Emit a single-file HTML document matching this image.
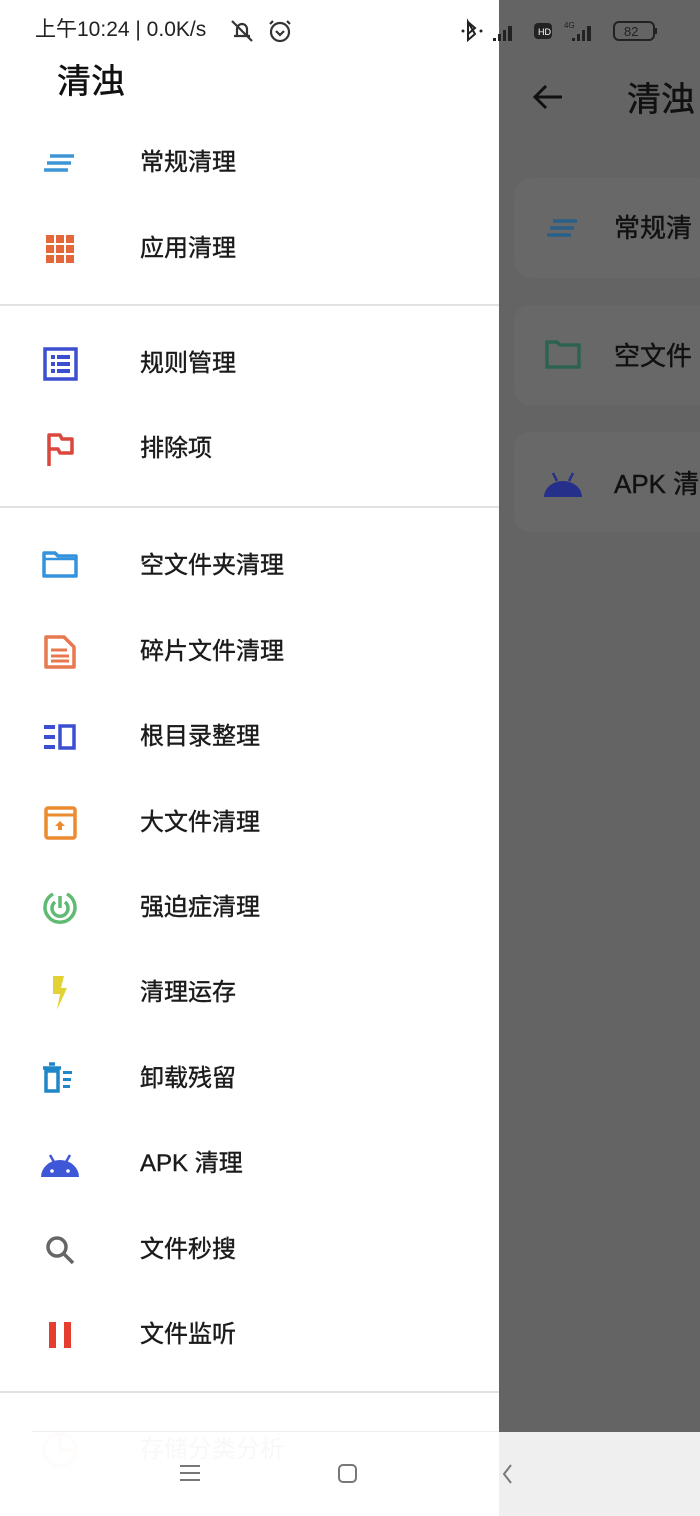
<!DOCTYPE html>
<html><head><meta charset="utf-8"><style>
*{margin:0;padding:0;box-sizing:border-box}
body{width:700px;height:1516px;position:relative;overflow:hidden;background:#646464;font-family:"Liberation Sans","Noto Sans CJK SC",sans-serif;color:#1a1a1a}
.abs{position:absolute}
#drawer{left:0;top:0;width:499px;height:1516px;background:#fff}
.t{position:absolute;left:140px;font-size:24px;line-height:30px;transform:translateY(-15px);color:#1b1b1b;-webkit-text-stroke:0.4px #1b1b1b}
.ic{position:absolute;left:40px;width:40px;height:40px;transform:translateY(-20px)}
.hr{position:absolute;left:0;width:499px;height:2px;background:#e2e2e2}
.card{position:absolute;left:514px;width:200px;height:100px;background:#686868;border-radius:16px}
.rt{position:absolute;left:614px;font-size:26px;color:#111;line-height:30px;transform:translateY(-15px);-webkit-text-stroke:0.4px #111}
</style></head><body>
<div id="drawer" class="abs"></div>
<!-- status bar -->
<div class="abs" style="left:35px;top:16px;font-size:21px;color:#222;line-height:28px">上午10:24 | 0.0K/s</div>
<svg class="abs" style="left:228px;top:17px" width="66" height="28" viewBox="0 0 66 28" fill="none" stroke="#333" stroke-width="2.2"><path d="M6 19h16M9 19v-7a5 5 0 0 1 10 0v7M4 4l20 20"/><circle cx="52" cy="15" r="9"/><path d="M48 14l4 4 4-4M45 4l-3 3M59 4l3 3"/></svg>
<svg class="abs" style="left:460px;top:18px" width="200" height="28" viewBox="0 0 200 28"><path d="M8 4l7 6-7 6V4l7 12-7 6V12" fill="none" stroke="#222" stroke-width="2"/><circle cx="3" cy="13" r="1.5" fill="#222"/><circle cx="21" cy="13" r="1.5" fill="#222"/>
<g fill="#222"><rect x="33" y="20" width="3" height="3"/><rect x="38" y="16" width="3" height="7"/><rect x="43" y="12" width="3" height="11"/><rect x="48" y="8" width="4" height="15"/><rect x="74" y="5" width="18" height="16" rx="4"/><rect x="112" y="20" width="3" height="3"/><rect x="117" y="16" width="3" height="7"/><rect x="122" y="12" width="3" height="11"/><rect x="127" y="8" width="4" height="15"/></g>
<text x="78" y="17" font-size="9" fill="#fff" font-family="Liberation Sans">HD</text><text x="104" y="10" font-size="8" fill="#222" font-family="Liberation Sans">4G</text>
<rect x="154" y="4" width="40" height="18" rx="5" fill="none" stroke="#222" stroke-width="2"/><rect x="195" y="10" width="2" height="6" fill="#222"/><text x="164" y="18" font-size="13" fill="#222" font-family="Liberation Sans">82</text></svg>
<div class="abs" style="left:57px;top:60px;font-size:34px;line-height:44px;color:#111;-webkit-text-stroke:0.5px #111">清浊</div>

<!-- items -->
<svg class="ic" style="top:163px" viewBox="0 0 40 40"><g stroke="#3d95d6" stroke-width="3.5"><path d="M10 13h24M7 20h24M4 27h24"/></g></svg>
<div class="t" style="top:163px">常规清理</div>
<svg class="ic" style="top:249px" viewBox="0 0 40 40"><g fill="#e4673a"><rect x="6" y="6" width="8" height="8"/><rect x="16" y="6" width="8" height="8"/><rect x="26" y="6" width="8" height="8"/><rect x="6" y="16" width="8" height="8"/><rect x="16" y="16" width="8" height="8"/><rect x="26" y="16" width="8" height="8"/><rect x="6" y="26" width="8" height="8"/><rect x="16" y="26" width="8" height="8"/><rect x="26" y="26" width="8" height="8"/></g></svg>
<div class="t" style="top:249px">应用清理</div>
<div class="hr" style="top:304px"></div>
<svg class="ic" style="top:364px" viewBox="0 0 40 40"><rect x="5" y="5" width="31" height="30" fill="none" stroke="#3b4fd0" stroke-width="3.5"/><g fill="#3b4fd0"><rect x="11" y="11" width="4" height="4"/><rect x="17" y="11" width="13" height="4"/><rect x="11" y="18" width="4" height="4"/><rect x="17" y="18" width="13" height="4"/><rect x="11" y="25" width="4" height="4"/><rect x="17" y="25" width="13" height="4"/></g></svg>
<div class="t" style="top:364px">规则管理</div>
<svg class="ic" style="top:449px" viewBox="0 0 40 40"><path d="M9 37V6h11l2 4h10v14H20l-2-4H9" fill="none" stroke="#d9473d" stroke-width="3.5" stroke-linejoin="round"/></svg>
<div class="t" style="top:449px">排除项</div>
<div class="hr" style="top:506px"></div>
<svg class="ic" style="top:566px" viewBox="0 0 40 40"><path d="M4 7h11l3 3h18v20H4z" fill="none" stroke="#3493dc" stroke-width="3.5" stroke-linejoin="round"/><path d="M4 13h32" stroke="#3493dc" stroke-width="2.5"/></svg>
<div class="t" style="top:566px">空文件夹清理</div>
<svg class="ic" style="top:652px" viewBox="0 0 40 40"><path d="M6 5h18l10 10v20H6z" fill="none" stroke="#e8784f" stroke-width="3.5" stroke-linejoin="round"/><path d="M11 18h16M11 24h18M11 29h18" stroke="#e8784f" stroke-width="3"/></svg>
<div class="t" style="top:652px">碎片文件清理</div>
<svg class="ic" style="top:737px" viewBox="0 0 40 40"><g fill="#3b4fd0"><rect x="4" y="8" width="11" height="4"/><rect x="4" y="18" width="11" height="4"/><rect x="4" y="28" width="11" height="4"/></g><rect x="20" y="9" width="14" height="22" fill="none" stroke="#3b4fd0" stroke-width="3.5"/></svg>
<div class="t" style="top:737px">根目录整理</div>
<svg class="ic" style="top:823px" viewBox="0 0 40 40"><rect x="6" y="5" width="29" height="30" rx="2" fill="none" stroke="#eb8a2f" stroke-width="3.5"/><path d="M6 12h29" stroke="#eb8a2f" stroke-width="3"/><path d="M20 18l-5 5h3v4h4v-4h3z" fill="#eb8a2f"/></svg>
<div class="t" style="top:823px">大文件清理</div>
<svg class="ic" style="top:908px" viewBox="0 0 40 40" fill="none" stroke="#5fba73" stroke-width="3.5"><path d="M27 6a15 15 0 1 1-14 0"/><path d="M25 14a8 8 0 1 1-10 0"/><path d="M20 8v12"/></svg>
<div class="t" style="top:908px">强迫症清理</div>
<svg class="ic" style="top:993px" viewBox="0 0 40 40"><path d="M13 3h11l-3 12h6L17 37l3-16h-7z" fill="#e3d236"/></svg>
<div class="t" style="top:993px">清理运存</div>
<svg class="ic" style="top:1079px" viewBox="0 0 40 40"><g fill="none" stroke="#1f86c7" stroke-width="3.5"><rect x="6" y="12" width="12" height="20"/><path d="M3 9h18M9 5h6"/></g><g fill="#1f86c7"><rect x="23" y="12" width="9" height="3"/><rect x="23" y="19" width="8" height="3"/><rect x="23" y="26" width="7" height="3"/></g></svg>
<div class="t" style="top:1079px">卸载残留</div>
<svg class="ic" style="top:1164px" viewBox="0 0 40 40"><path d="M1 33a19 17 0 0 1 38 0z" fill="#3d57d6"/><path d="M10 11l4 7M30 11l-4 7" stroke="#3d57d6" stroke-width="2.5"/><circle cx="12" cy="27" r="1.8" fill="#fff"/><circle cx="28" cy="27" r="1.8" fill="#fff"/></svg>
<div class="t" style="top:1164px">APK 清理</div>
<svg class="ic" style="top:1250px" viewBox="0 0 40 40" fill="none" stroke="#666" stroke-width="3.5"><circle cx="17" cy="17" r="9"/><path d="M24 24l9 9"/></svg>
<div class="t" style="top:1250px">文件秒搜</div>
<svg class="ic" style="top:1335px" viewBox="0 0 40 40"><rect x="9" y="7" width="7" height="26" fill="#e53e30"/><rect x="24" y="7" width="7" height="26" fill="#e53e30"/></svg>
<div class="t" style="top:1335px">文件监听</div>
<div class="hr" style="top:1391px"></div>
<svg class="ic" style="top:1450px;opacity:.15" viewBox="0 0 40 40" fill="none" stroke="#e53e30" stroke-width="3"><circle cx="20" cy="20" r="16"/><path d="M20 4v16h16"/></svg>
<div class="t" style="top:1450px;color:#ccc;-webkit-text-stroke:0">存储分类分析</div>
<div class="abs" style="left:0;top:1432px;width:499px;height:84px;background:rgba(255,255,255,.85)"></div>
<div class="abs" style="left:32px;top:1431px;width:467px;height:1px;background:#eee"></div>
<div class="abs" style="left:499px;top:1432px;width:201px;height:84px;background:#efefef"></div>
<svg class="abs" style="left:170px;top:1460px" width="360" height="30" viewBox="0 0 360 30" fill="none" stroke="#777" stroke-width="2"><path d="M10 6h20M10 13h20M10 20h20"/><rect x="169" y="5" width="17" height="17" rx="4"/><path d="M341 5l-7 9 7 9"/></svg>

<!-- right panel -->
<svg class="abs" style="left:530px;top:82px" width="36" height="30" viewBox="0 0 36 30" fill="none" stroke="#111" stroke-width="3"><path d="M32 15H5M16 4L5 15l11 11"/></svg>
<div class="abs" style="left:627px;top:78px;font-size:34px;line-height:44px;color:#111;-webkit-text-stroke:0.5px #111">清浊</div>
<div class="card" style="top:178px"></div>
<div class="card" style="top:305px"></div>
<div class="card" style="top:432px"></div>
<svg class="abs" style="left:544px;top:213px" width="40" height="30" viewBox="0 0 40 30"><g stroke="#2a5f88" stroke-width="3.5"><path d="M9 8h24M6 15h24M3 22h24"/></g></svg>
<div class="rt" style="top:228px">常规清</div>
<svg class="abs" style="left:544px;top:337px" width="40" height="36" viewBox="0 0 40 36"><path d="M3 5h10l3 3h19v22H3z" fill="none" stroke="#2d6253" stroke-width="3.5"/></svg>
<div class="rt" style="top:356px">空文件</div>
<svg class="abs" style="left:542px;top:468px" width="42" height="32" viewBox="0 0 40 32"><path d="M1 29a19 16 0 0 1 38 0z" fill="#26308a"/><path d="M10 5l4 8M30 5l-4 8" stroke="#26308a" stroke-width="2.5"/></svg>
<div class="rt" style="top:484px">APK 清</div>
</body></html>
